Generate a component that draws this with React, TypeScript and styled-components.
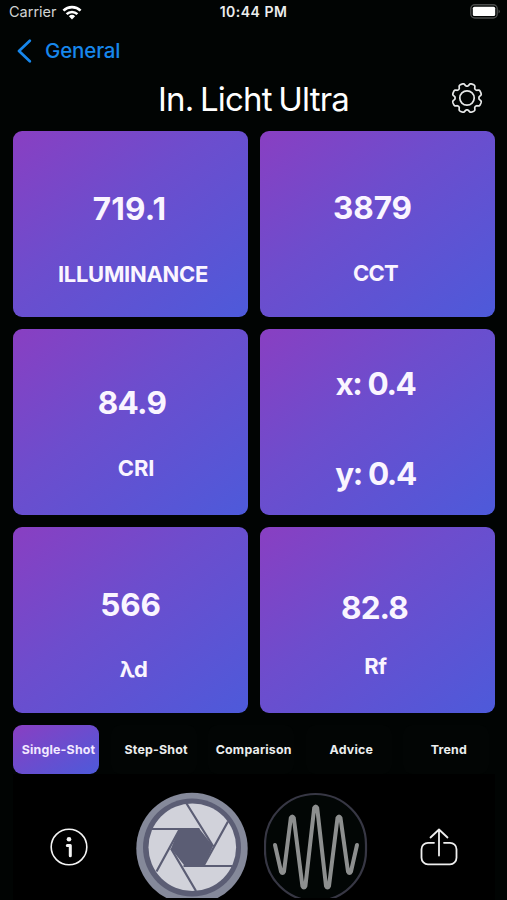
import React from 'react';
import styled, { createGlobalStyle } from 'styled-components';

const Global = createGlobalStyle`
  * { box-sizing: border-box; }
  body { margin: 0; background: #010403; overflow: hidden; }
`;

const Screen = styled.div`
  width: 507px;
  height: 900px;
  overflow: hidden;
  display: flex;
  flex-direction: column;
  background: #010403;
  color: #fff;
  font-family: Inter, 'Liberation Sans', sans-serif;
`;

const StatusBar = styled.header`
  height: 25px;
  display: grid;
  grid-template-columns: 1fr auto 1fr;
  padding: 0 6px 0 9px;
  line-height: 24px;
`;

const Carrier = styled.div`
  display: flex;
  align-items: center;
  gap: 5px;
  padding-bottom: 2px;
  font-size: 14.5px;
  letter-spacing: 0;
  color: #d2d4d4;
`;

const Clock = styled.div`
  font-size: 14px;
  font-weight: 600;
  letter-spacing: 0.5px;
  margin-left: -3px;
  color: #eceeee;
`;

const Battery = styled.div`
  display: flex;
  align-items: center;
  justify-content: flex-end;
  padding-bottom: 3px;
`;

const BackLink = styled.a`
  height: 51px;
  display: flex;
  align-items: center;
  gap: 13px;
  padding-left: 17px;
  font-size: 20.5px;
  font-weight: 500;
  letter-spacing: -0.15px;
  color: #1787ec;
`;

const TitleRow = styled.div`
  height: 55px;
  display: grid;
  grid-template-columns: 1fr auto 1fr;
  align-items: center;
  padding-bottom: 10px;
`;

const Title = styled.h1`
  grid-column: 2;
  margin: 0;
  font-size: 33px;
  line-height: 44px;
  font-weight: 400;
  letter-spacing: -0.8px;
  word-spacing: -2px;
`;

const SettingsButton = styled.div`
  display: flex;
  justify-content: flex-end;
  padding: 0 24px 1px 0;
`;

const Grid = styled.main`
  display: grid;
  grid-template-columns: 235px 235px;
  grid-auto-rows: 186px;
  gap: 12px;
  padding-left: 13px;
`;

const Card = styled.section<{ $top: number; $gap: number }>`
  border-radius: 9px;
  background: linear-gradient(to bottom right, #893fc2, #6d4dcd 42%, #4d5ada);
  padding-top: ${p => p.$top}px;
  display: flex;
  flex-direction: column;
  align-items: center;
  gap: ${p => p.$gap}px;
`;

const Value = styled.div<{ $nudge: number; $track: number }>`
  height: 40px;
  line-height: 40px;
  font-size: 31.5px;
  font-weight: 650;
  color: #faf5ff;
  white-space: nowrap;
  margin-left: ${p => p.$nudge}px;
  letter-spacing: ${p => p.$track}px;
`;

const Label = styled(Value)`
  height: 28px;
  line-height: 28px;
  font-size: 22px;
`;

const Tabs = styled.nav`
  display: grid;
  grid-template-columns: repeat(5, 86px);
  gap: 11.6px;
  padding: 12px 0 0 13px;
`;

const Tab = styled.div<{ $active: boolean }>`
  height: 49px;
  line-height: 49px;
  border-radius: 9px;
  text-align: center;
  white-space: nowrap;
  font-size: 12.4px;
  font-weight: 700;
  letter-spacing: 0.2px;
  padding-left: 5px;
  color: ${p => (p.$active ? '#f2e9ff' : '#eceeee')};
  background: ${p => (p.$active ? 'linear-gradient(to bottom right, #893fc2, #4d5ada)' : '#020504')};
`;

const Dock = styled.footer`
  flex: 1;
  margin: 0 12px 0 13px;
  background: #000;
  display: flex;
  padding-top: 18px;
  align-items: flex-start;
`;

const InfoSlot = styled.div`
  width: 123px;
  padding: 36px 0 0 37px;
`;

const ApertureSlot = styled.div`
  width: 128px;
  height: 106px;
  overflow: hidden;
`;

const WaveSlot = styled(ApertureSlot)`
  width: 156px;
`;

const ShareSlot = styled.div`
  padding-top: 36px;
`;

type Metric = { value: string; label: string; top: number; gap: number; vx: number; lx: number; vt: number; lt: number };

const metrics: Metric[] = [
  { value: '719.1', label: 'ILLUMINANCE', top: 58, gap: 30.5, vx: -2, lx: 5, vt: 0.2, lt: -0.3 },
  { value: '3879', label: 'CCT', top: 56.5, gap: 31, vx: -10, lx: -4, vt: -0.1, lt: -0.7 },
  { value: '84.9', label: 'CRI', top: 54, gap: 31, vx: 3, lx: 11, vt: -0.7, lt: -0.2 },
  { value: 'x: 0.4', label: 'y: 0.4', top: 34.5, gap: 50.5, vx: -4, lx: -4, vt: -1.4, lt: -1.4 },
  { value: '566', label: 'λd', top: 57.5, gap: 30, vx: 0, lx: 6, vt: -0.2, lt: -0.6 },
  { value: '82.8', label: 'Rf', top: 61, gap: 23.5, vx: -6, lx: -4, vt: -0.9, lt: -0.4 },
];

const tabs = ['Single-Shot', 'Step-Shot', 'Comparison', 'Advice', 'Trend'];

const WifiIcon = () => (
  <svg width="20" height="15" viewBox="0 0 20 15" fill="none" stroke="#fff" strokeWidth="2.6">
    <path d="M1.4 5.6a12.4 12.4 0 0 1 17.2 0" />
    <path d="M4.6 9.1a7.8 7.8 0 0 1 10.8 0" />
    <path d="M10 14.4 6.9 11.3a4.5 4.5 0 0 1 6.2 0z" fill="#fff" stroke="none" />
  </svg>
);

const BatteryIcon = () => (
  <svg width="31" height="15" viewBox="0 0 31 15">
    <rect x="0.8" y="0.8" width="26.4" height="13.2" rx="4" fill="none" stroke="#4b4d4d" strokeWidth="1.4" />
    <rect x="2.8" y="2.7" width="22.4" height="9.4" rx="1.6" fill="#fff" />
    <path d="M28.6 5.4q2.4 2 0 4z" fill="#5b5d5d" />
  </svg>
);

/* Eight-lobed gear outline, with narrow notches between wide rounded teeth. */
const gearOutline = Array.from({ length: 161 }, (_, i) => {
  const a = (i / 160) * Math.PI * 2;
  const r = 13.3 + 1.5 * Math.tanh(-2.2 * (Math.cos(8 * a) - 0.3));
  return `${(16 + r * Math.sin(a)).toFixed(2)} ${(16 - r * Math.cos(a)).toFixed(2)}`;
}).join('L');

const GearIcon = () => (
  <svg width="32" height="32" viewBox="0 0 32 32" fill="none" stroke="#e6e8e8" strokeWidth="1.7" strokeLinejoin="round">
    <path d={`M${gearOutline}z`} />
    <circle cx="16" cy="16" r="7.2" />
  </svg>
);

const InfoIcon = () => (
  <svg width="38" height="38" viewBox="0 0 38 38" fill="none" stroke="#f4f4f4">
    <circle cx="19" cy="19" r="17.8" strokeWidth="1.6" />
    <circle cx="19" cy="11.2" r="2.3" fill="#f4f4f4" stroke="none" />
    <path d="M17.3 17.6h3v10.2" strokeWidth="3" strokeLinecap="round" strokeLinejoin="round" />
  </svg>
);

const ApertureIcon = () => (
  <svg width="112" height="112" viewBox="136 792 112 112">
    <circle cx="192" cy="848.5" r="55.7" fill="#85899a" />
    <circle cx="192" cy="847.5" r="49" fill="#5b5d74" />
    <circle cx="192.3" cy="847.2" r="43.8" fill="#d1d2da" />
    <path d="M179 829H199.5L213 846 204.5 865H184L171 848.5z" fill="#5b5d74" />
    <path
      d="M186.5 803.5 213 846M228 821.5 204 865M232.5 866H183.5M196 891 171 848.5M156.5 871.5 179.5 829.5M152 829H199.5"
      stroke="#5b5d74"
      strokeWidth="2.2"
    />
  </svg>
);

const WaveIcon = () => (
  <svg width="104" height="112" viewBox="264 792 104 112" fill="none">
    <rect x="265" y="794" width="101" height="107" rx="50.5" fill="#020605" stroke="#373744" strokeWidth="2.2" />
    <path
      d="M275 845 281 871.5q1.5 3 3 0L290.8 818q1.5-3 3 0L302.4 886q1.5 3 3 0L314.2 808q1.5-3 3 0L326 886q1.5 3 3 0L337.5 818q1.5-3 3 0L348 871.5q1.5 3 3 0L357 845"
      stroke="#8d8f8f"
      strokeWidth="4"
      strokeLinecap="round"
      strokeLinejoin="round"
    />
  </svg>
);

const ShareIcon = () => (
  <svg width="38" height="38" viewBox="0 0 38 38" fill="none" stroke="#eee" strokeWidth="1.8" strokeLinecap="round" strokeLinejoin="round">
    <path d="M14 14.8H8a6.5 6.5 0 0 0-6.5 6.5v8.5A6.5 6.5 0 0 0 8 36.3h22a6.5 6.5 0 0 0 6.5-6.5v-8.5a6.5 6.5 0 0 0-6.5-6.5h-6" />
    <path d="M19 27.5V1.5M10.5 9.5 19 1.5l8.5 8" />
  </svg>
);

export default function App() {
  return (
    <Screen>
      <Global />
      <StatusBar>
        <Carrier>Carrier <WifiIcon /></Carrier>
        <Clock>10:44 PM</Clock>
        <Battery><BatteryIcon /></Battery>
      </StatusBar>
      <BackLink>
        <svg width="15" height="24" viewBox="0 0 15 24" fill="none" stroke="#1787ec" strokeWidth="2.7" strokeLinecap="round" strokeLinejoin="round">
          <path d="M12.8 1.8 2 12l10.8 10.2" />
        </svg>
        General
      </BackLink>
      <TitleRow>
        <Title>In. Licht Ultra</Title>
        <SettingsButton><GearIcon /></SettingsButton>
      </TitleRow>
      <Grid>
        {metrics.map(m => {
          const LabelPart = m.label === 'y: 0.4' ? Value : Label;
          return (
            <Card key={m.label} $top={m.top} $gap={m.gap}>
              <Value $nudge={m.vx} $track={m.vt}>{m.value}</Value>
              <LabelPart $nudge={m.lx} $track={m.lt}>{m.label}</LabelPart>
            </Card>
          );
        })}
      </Grid>
      <Tabs>
        {tabs.map((t, i) => <Tab key={t} $active={i === 0}>{t}</Tab>)}
      </Tabs>
      <Dock>
        <InfoSlot><InfoIcon /></InfoSlot>
        <ApertureSlot><ApertureIcon /></ApertureSlot>
        <WaveSlot><WaveIcon /></WaveSlot>
        <ShareSlot><ShareIcon /></ShareSlot>
      </Dock>
    </Screen>
  );
}
